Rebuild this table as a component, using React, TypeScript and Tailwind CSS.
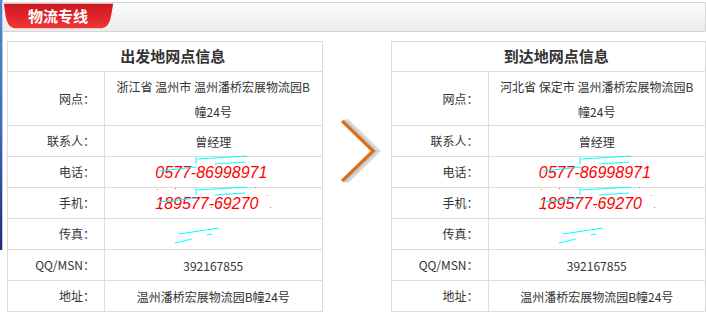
import React from 'react';

type Row = { label: string; value: React.ReactNode; tall?: boolean };

const font = { fontFamily: '"Noto Sans CJK SC", "Noto Sans", sans-serif' };

const PhoneNumber: React.FC<{ text: string; dots?: boolean }> = ({ text, dots }) => (
    <span className="relative inline-block w-[116px] text-left">
        <span className="italic text-[16px] text-[#ff0000] [font-family:'Liberation_Sans',Arial,sans-serif] leading-none">{text}</span>
        <svg className="absolute left-0 top-[-6px] pointer-events-none" width="120" height="28" viewBox="0 0 120 28">
            <line x1="41" y1="3" x2="41" y2="10" stroke="#00ffff" strokeWidth="1" />
            <line x1="42" y1="5" x2="92" y2="2" stroke="#00ffff" strokeWidth="1" />
            <line x1="4" y1="17" x2="42" y2="13" stroke="#00ffff" strokeWidth="1" />
            <line x1="60" y1="10" x2="90" y2="8" stroke="#00ffff" strokeWidth="1" />
            {dots && (
                <>
                    <rect x="2" y="4" width="1" height="1" fill="#c0a000" />
                    <rect x="20" y="3" width="1" height="1" fill="#ff4080" />
                    <rect x="100" y="2" width="1" height="1" fill="#40c040" />
                    <rect x="112" y="10" width="1" height="1" fill="#c0a000" />
                    <rect x="115" y="22" width="1" height="1" fill="#ff4080" />
                    <rect x="5" y="24" width="1" height="1" fill="#40c040" />
                    <rect x="56" y="22" width="1" height="1" fill="#40c040" />
                </>
            )}
        </svg>
    </span>
);

const FaxScribble: React.FC = () => (
    <svg className="inline-block mr-[30px]" width="46" height="18" viewBox="0 0 46 18">
        <line x1="4" y1="7" x2="44" y2="1" stroke="#00ffff" strokeWidth="1" />
        <line x1="0" y1="16" x2="17" y2="12" stroke="#00ffff" strokeWidth="1" />
        <line x1="32" y1="8" x2="37" y2="7" stroke="#00ffff" strokeWidth="1" />
    </svg>
);

const InfoTable: React.FC<{ title: string; rows: Row[] }> = ({ title, rows }) => (
    <table className="border-collapse border border-[#dcdcdc] w-[316px] text-[12px] text-[#333]" style={font}>
        <tbody>
            <tr className="h-[30px]">
                <th colSpan={2} className="border border-[#dcdcdc] text-center font-bold text-[15px] text-[#333] pl-[16px]">
                    {title}
                </th>
            </tr>
            {rows.map(r => (
                <tr key={r.label} className={r.tall ? 'h-[54px]' : 'h-[31px]'}>
                    <td className="border border-[#dcdcdc] w-[97px] text-right pr-[9px] align-middle">{r.label}</td>
                    <td className="border border-[#dcdcdc] text-center align-middle leading-[25px] px-[4px]">{r.value}</td>
                </tr>
            ))}
        </tbody>
    </table>
);

const makeRows = (site: React.ReactNode): Row[] => [
    { label: '网点：', value: site, tall: true },
    { label: '联系人：', value: '曾经理' },
    { label: '电话：', value: <PhoneNumber text="0577-86998971" /> },
    { label: '手机：', value: <PhoneNumber text="189577-69270" dots /> },
    { label: '传真：', value: <FaxScribble /> },
    { label: 'QQ/MSN：', value: '392167855' },
    { label: '地址：', value: '温州潘桥宏展物流园B幢24号' },
];

const App: React.FC = () => {
    const fromRows = makeRows(<>浙江省 温州市 温州潘桥宏展物流园B<br />幢24号</>);
    const toRows = makeRows(<>河北省 保定市 温州潘桥宏展物流园B<br />幢24号</>);

    return (
        <div className="relative w-[706px] h-[316px] bg-white overflow-hidden">
            {/* left edge of neighbouring panel */}
            <div className="absolute left-0 top-0 w-[3px] h-[250px] bg-gradient-to-b from-[#4a8ad8] via-[#3a6cc8] to-[#1c2a88] border-r border-[#c8c8c8]" />

            <div className="ml-[2px] mt-[2px] h-[30px] border-t border-b border-r border-[#d6d6d6] bg-gradient-to-b from-[#fdfdfd] to-[#ebebeb] flex">
                <div className="relative w-[116px] h-full">
                    <svg className="absolute left-0 top-0" width="116" height="28" viewBox="0 0 116 28">
                        <defs>
                            <linearGradient id="tabRed" x1="0" y1="0" x2="0" y2="1">
                                <stop offset="0" stopColor="#c8181c" />
                                <stop offset="0.55" stopColor="#e0262a" />
                                <stop offset="1" stopColor="#ee3a3a" />
                            </linearGradient>
                        </defs>
                        <path d="M1 0 L112 0 L110 12 Q108 25 100 26 L12 26 Q5 25 3 14 Z" fill="url(#tabRed)" stroke="#f4f4f4" strokeWidth="1.5" />
                    </svg>
                    <div className="relative h-[26px] flex items-center pl-[26px] text-white font-bold text-[15px]" style={font}>
                        物流专线
                    </div>
                </div>
            </div>

            <div className="flex pl-[7px] pt-[9px]">
                <InfoTable title="出发地网点信息" rows={fromRows} />
                <div className="w-[68px] shrink-0">
                    <svg className="ml-[14px] mt-[76px]" width="46" height="70" viewBox="0 0 46 70">
                        <polyline points="8,4 39,34 8,64" fill="none" stroke="#d6d6d6" strokeWidth="7" />
                        <polyline points="6,4 37,34 6,64" fill="none" stroke="#b8b8b8" strokeWidth="4" />
                        <polyline points="5,4 36,34 5,64" fill="none" stroke="#e36a0c" strokeWidth="3" />
                    </svg>
                </div>
                <InfoTable title="到达地网点信息" rows={toRows} />
            </div>
        </div>
    );
};

export default App;
